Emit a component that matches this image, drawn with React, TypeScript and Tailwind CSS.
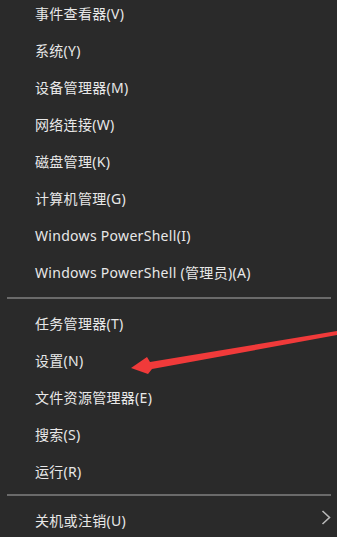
export default function App() {
  const groupA = [
    "事件查看器(V)",
    "系统(Y)",
    "设备管理器(M)",
    "网络连接(W)",
    "磁盘管理(K)",
    "计算机管理(G)",
    "Windows PowerShell(I)",
    "Windows PowerShell (管理员)(A)",
  ];
  const groupB = ["任务管理器(T)", "设置(N)", "文件资源管理器(E)", "搜索(S)", "运行(R)"];

  const row = (label: string) => (
    <div key={label} className="h-[37px] flex items-center pl-[35px] text-[14px] tracking-[0.3px] text-[#e8e8e8]">
      {label}
    </div>
  );

  return (
    <div
      className="relative h-screen w-full overflow-hidden bg-[#2a2a2a]"
      style={{ fontFamily: '"Noto Sans", "Noto Sans CJK SC", sans-serif' }}
    >
      <div className="flex flex-col -mt-[5px]">
        {groupA.map(row)}
        <div className="pt-[6px] pb-[6px] pl-[7px] pr-[6px]">
          <div className="h-[2px] bg-[#6a6a6a]" />
        </div>
        {groupB.map(row)}
        <div className="pt-[4px] pb-[6px] pl-[7px] pr-[6px]">
          <div className="h-[2px] bg-[#6a6a6a]" />
        </div>
        <div className="h-[37px] flex items-center justify-between pl-[35px] pr-[6px] text-[14px] tracking-[0.3px] text-[#e8e8e8]">
          <span>关机或注销(U)</span>
          <svg width="10" height="15" viewBox="0 0 10 15" className="-mt-[6px]">
            <polyline points="1.5,1 8.5,7.5 1.5,14" fill="none" stroke="#b8b8b8" strokeWidth="1.6" />
          </svg>
        </div>
      </div>

      {/* red annotation arrow */}
      <svg className="absolute inset-0 pointer-events-none" width="337" height="537" viewBox="0 0 337 537">
        <polygon
          points="131,368 147,357 150,362 337,331 337,335 152,369 148,374"
          fill="#f03a3a"
        />
      </svg>
    </div>
  );
}
